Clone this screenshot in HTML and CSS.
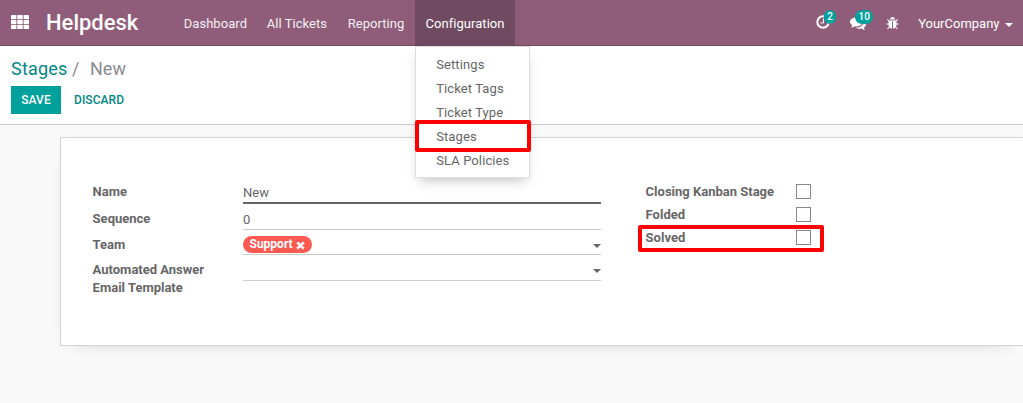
FILE: index.html
```html
<!DOCTYPE html>
<html lang="en">
<head>
<meta charset="utf-8">
<title>Helpdesk</title>
<link rel="stylesheet" href="styles.css">
</head>
<body>
<header class="navbar">
  <svg class="apps" width="18" height="14" viewBox="0 0 18 14"><g fill="currentColor"><rect width="5.4" height="4.2" rx=".5"/><rect x="6.3" width="5.4" height="4.2" rx=".5"/><rect x="12.6" width="5.4" height="4.2" rx=".5"/><rect y="4.900" width="5.4" height="4.2" rx=".5"/><rect x="6.3" y="4.900" width="5.4" height="4.2" rx=".5"/><rect x="12.6" y="4.900" width="5.4" height="4.2" rx=".5"/><rect y="9.800" width="5.4" height="4.2" rx=".5"/><rect x="6.3" y="9.800" width="5.4" height="4.2" rx=".5"/><rect x="12.6" y="9.800" width="5.4" height="4.2" rx=".5"/></g></svg>
  <div class="brand"><span>Helpdesk</span></div>
  <nav class="menu">
    <a class="m1">Dashboard</a>
    <a class="m2">All Tickets</a>
    <a class="m3">Reporting</a>
    <div class="open">
      <a>Configuration</a>
      <div class="dropdown">
        <a>Settings</a>
        <a>Ticket Tags</a>
        <a>Ticket Type</a>
        <a>Stages</a>
        <a>SLA Policies</a>
        <span class="mark mark-menu"></span>
      </div>
    </div>
  </nav>
  <div class="systray">
    <div class="tray clock">
      <svg width="14" height="14" viewBox="0 0 14 14" fill="none" stroke="currentColor"><circle cx="7" cy="7" r="5.7" stroke-width="2"/><path d="M7.500 3.500v4.500H4.500" stroke-width="1"/></svg>
      <span class="badge">2</span>
    </div>
    <div class="tray chat">
      <svg width="16" height="16" viewBox="0 0 1792 1792" fill="currentColor"><path d="M1408 768q0 139-94 257t-256.500 186.500-353.500 68.500q-86 0-176-16-124 88-278 128-36 9-86 16h-3q-11 0-20.500-8t-11.500-21q-1-3-1-6.500t.5-6.500 2-6l2.500-5 3.500-5.500 4-5 4.500-5 4-4.500q5-6 23-25t26-29.500 22.500-29 25-38.500 20.500-44q-124-72-195-177t-71-224q0-139 94-257t256.500-186.500 353.500-68.500 353.500 68.500 256.500 186.500 94 257zm384 256q0 120-71 224.500t-195 176.500q10 24 20.500 44t25 38.500 22.500 29 26 29.500 23 25q1 1 4 4.500t4.500 5 4 5 3.500 5.500l2.500 5 2 6 .5 6.500-1 6.500q-3 14-13 22t-22 7q-50-7-86-16-154-40-278-128-90 16-176 16-271 0-472-132 58 4 88 4 161 0 309-45t264-129q125-92 192-212t67-254q0-77-23-152 129 71 204 178t75 230z"/></svg>
      <span class="badge wide">10</span>
    </div>
    <div class="tray bug">
      <svg width="13" height="13" viewBox="64 64 1664 1664" fill="currentColor"><path d="M1696 960q0 26-19 45t-45 19h-224q0 171-67 290l208 209q19 19 19 45t-19 45q-18 19-45 19t-45-19l-198-197q-5 5-15 13t-42 28.500-65 36.500-82 29-97 13v-896h-128v896q-51 0-101.500-13.500t-87-33-66-39-43.500-32.500l-15-14-183 207q-20 21-48 21-24 0-43-16-19-18-20.500-44.500t15.500-46.500l202-227q-58-114-58-274h-224q-26 0-45-19t-19-45 19-45 45-19h224v-294l-173-173q-19-19-19-45t19-45 45-19 45 19l173 173h844l173-173q19-19 45-19t45 19 19 45-19 45l-173 173v294h224q26 0 45 19t19 45zm-480-576h-640q0-133 93.500-226.500t226.500-93.500 226.500 93.500 93.500 226.500z"/></svg>
    </div>
    <a class="company">YourCompany</a><i class="caret"></i>
  </div>
</header>
<section class="control">
  <div class="crumbs"><a>Stages</a><span class="slash">/</span><span>New</span></div>
  <div class="buttons"><button class="save">SAVE</button><button class="discard">DISCARD</button></div>
</section>
<main class="content">
  <div class="sheet">
    <div class="fields">
      <div class="row r-name"><label>Name</label><div class="value">New</div></div>
      <div class="row r-seq"><label>Sequence</label><div class="value">0</div></div>
      <div class="row r-team"><label>Team</label><div class="value"><span class="tag">Support<svg width="9" height="9" viewBox="0 0 9 9"><path d="M1.300 1.300l6.400 6.400M7.700 1.300L1.300 7.700" stroke="currentColor" stroke-width="2.600"/></svg></span><i class="caret"></i></div></div>
      <div class="row r-mail"><label>Automated Answer<br>Email Template</label><div class="value"><i class="caret"></i></div></div>
    </div>
    <div class="checks">
      <div class="check"><label>Closing Kanban Stage</label><i class="box"></i></div>
      <div class="check"><label>Folded</label><i class="box"></i></div>
      <div class="check"><label>Solved</label><i class="box"></i><span class="mark mark-solved"></span></div>
    </div>
  </div>
</main>
</body>
</html>
```
FILE: styles.css
```css
* { box-sizing: border-box; }
body { margin: 0; width: 1023px; height: 403px; overflow: hidden; background: #f9f9f9; color: #666; font: 13px/18px Roboto, "Open Sans", sans-serif; }
svg { display: block; }
.navbar { display: flex; height: 46px; background: #8f5d79; border-bottom: 1px solid #6f4b61; color: #fff; padding-left: 11px; }
.apps { margin-top: 15px; }
.brand { width: 139px; padding-left: 17px; font-size: 22px; font-weight: 500; line-height: 46px; white-space: nowrap; }
.menu { display: flex; line-height: 47px; color: #f5eff3; letter-spacing: .05px; }
.menu > a { padding: 0 0 0 15.7px; white-space: nowrap; }
.m1 { width: 83px; }
.m2 { width: 81px; }
.m3 { width: 83px; }
.open { position: relative; width: 100px; height: 46px; background: #6f4a60; text-align: center; color: #fff; }
.dropdown { position: absolute; z-index: 3; left: 0; top: 46px; width: 115px; height: 132px; padding-top: 6px; background: #fff; border: 1px solid #dedede; box-shadow: 0 6px 12px -4px rgba(0,0,0,.25); color: #666; text-align: left; letter-spacing: .1px; }
.dropdown a { display: block; height: 24px; line-height: 24px; padding-left: 20.2px; }
.mark { position: absolute; border: 4px solid #fe0000; border-radius: 2px; }
.mark-menu { left: -1px; top: 73px; width: 116px; height: 32px; }
.systray { display: flex; margin-left: auto; padding-right: 10px; line-height: 47px; }
.tray { position: relative; }
.clock { width: 34px; padding-top: 15px; }
.chat { width: 36px; padding-top: 15px; }
.bug { width: 32px; padding-top: 17px; }
.badge { position: absolute; left: 8px; top: 10px; width: 12px; height: 14px; border-radius: 7px; background: #00a09d; font-size: 10px; font-weight: 500; line-height: 14px; text-align: center; }
.badge.wide { left: 5px; width: 18px; }
.caret { border: 4px solid transparent; border-top-color: currentColor; border-bottom: 0; width: 0; height: 0; }
.systray .caret { margin: 23px 0 0 5.500px; }
.control { height: 79px; background: #fff; border-bottom: 1px solid #ccc; padding: 11px 0 0 11px; }
.crumbs { display: flex; font-size: 18px; line-height: 24px; color: #8b8b8b; }
.crumbs a { width: 61px; color: #008784; letter-spacing: .2px; }
.slash { width: 18px; }
.buttons { display: flex; margin-top: 5px; }
button { border: 0; height: 28px; padding: 0; background: none; font: 500 12px/29px Roboto, sans-serif; color: #008784; letter-spacing: .05px; }
.save { width: 50px; background: #00a09d; color: #fff; }
.discard { margin-left: 13px; }
.content { padding: 12px 0 0 60px; }
.sheet { display: flex; height: 209px; background: #fff; border: 1px solid #d3d3d3; border-right: 0; box-shadow: 0 5px 20px -15px rgba(0,0,0,.4); padding: 45px 0 0 32px; }
label { font-weight: 700; white-space: nowrap; margin-left: -.4px; }
.fields { width: 508px; margin-right: 45px; }
.row { display: flex; }
.row label { width: 150.4px; }
.value { display: flex; justify-content: space-between; width: 358px; border-bottom: 1px solid #ccc; }
.r-name .value { height: 21px; padding-top: 1px; border-bottom: 2px solid #666; }
.r-seq { padding-top: 6px; }
.r-seq .value { height: 20px; padding-top: 1px; }
.r-team { padding-top: 6px; }
.r-team .value { height: 19px; }
.r-mail { padding-top: 6px; }
.r-mail .value { height: 20px; }
.value .caret { margin-top: 8px; margin-left: auto; }
.tag { display: flex; align-items: center; height: 17px; padding: 0 7px 0 6.500px; border-radius: 9px; background: #ff5a52; color: #fff; font-size: 12px; font-weight: 700; line-height: 17px; }
.tag svg { margin: 1px 0 0 3.300px; }
.check { position: relative; display: flex; height: 23px; }
.check label { width: 150.4px; }
.box { width: 15px; height: 15px; margin-top: 1px; border: 1px solid #888; background: #fff; }
.mark-solved { left: -8px; top: -4px; width: 186px; height: 27px; }
```
